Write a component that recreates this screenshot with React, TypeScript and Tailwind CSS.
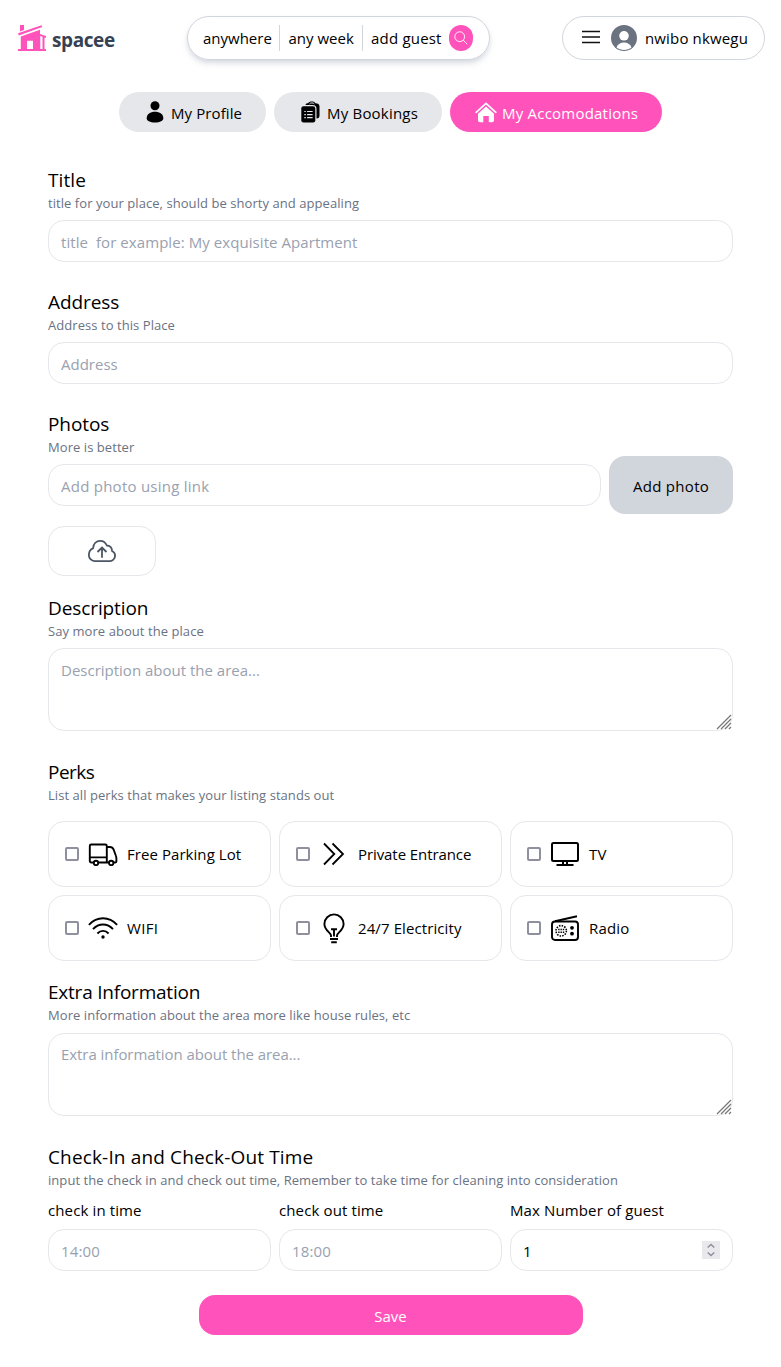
import type { ReactNode } from 'react';

const LogoIcon = () => (
  <svg width="28" height="26" viewBox="0 0 28 26" fill="#ff53bb" className="shrink-0">
    <path d="M2 0h4v5l-4 1.600z" />
    <path d="M0 8.300 23.500.200l.700 1.700L.800 10.500z" />
    <path d="M2.800 11.600 22 4.800V9l6 2v1.700h-1.500V24H28v2H0v-2h2.800zM9 15.700V24h6v-8.300zM22.300 11v13h2.200V11.700z" fillRule="evenodd" />
  </svg>
);

const SearchIcon = () => (
  <svg width="14" height="14" viewBox="0 0 14 14" fill="none" stroke="white" strokeWidth="0.9">
    <circle cx="5.700" cy="5.700" r="4.900" />
    <path d="m9.300 9.300 4 4" />
  </svg>
);

const MenuIcon = () => (
  <svg width="18" height="14" viewBox="0 0 18 14" stroke="#111" strokeWidth="1.500">
    <path d="M0 1.500h18M0 7h18M0 12.500h18" />
  </svg>
);

const AvatarIcon = () => (
  <svg width="26" height="26" viewBox="0 0 26 26">
    <circle cx="13" cy="13" r="13" fill="#6b7280" />
    <circle cx="13" cy="10.800" r="4.800" fill="white" />
    <path d="M5.500 22.500c1.300-3.400 4-5 7.500-5s6.200 1.600 7.500 5c-4 3.200-11 3.200-15 0z" fill="white" />
  </svg>
);

const PersonIcon = () => (
  <svg width="18" height="22" viewBox="0 0 18 22">
    <circle cx="9" cy="4.800" r="4.500" />
    <path d="M.700 17.300C.700 13 4.300 10.800 9 10.800s8.300 2.200 8.300 6.500c0 2.700-3.200 4.200-8.300 4.200S.700 20 .700 17.300z" />
  </svg>
);

const BookingsIcon = () => (
  <svg width="19" height="22" viewBox="0 0 19 22">
    <path d="M4.500 4C4.800 2.500 6 2.300 7 2.300 7.800.900 9 .400 10.800.400s3 .500 3.700 1.900c2.500 0 4 .900 4 3.200v9c0 2-.800 3-3 3V8c0-2.600-1.200-4-4-4z" />
    <path d="M8.500 2.900c.700-1.300 4.100-1.300 4.800 0" fill="none" stroke="#e5e7eb" strokeWidth="1" />
    <rect x=".300" y="5.300" width="14" height="16.200" rx="2.200" />
    <path d="M3.300 10.500h1.500m1.300 0h5.500M3.300 13.600h1.500m1.300 0h5.500M3.300 16.700h1.500m1.300 0h5.500" stroke="#e5e7eb" strokeWidth="1.200" />
  </svg>
);

const HomeIcon = () => (
  <svg width="22" height="21" viewBox="0 0 22 21" fill="white">
    <path d="m1.200 10.300 9.800-9 9.800 9" fill="none" stroke="white" strokeWidth="1.700" strokeLinecap="round" strokeLinejoin="round" />
    <path d="m11 4.500 8 7.300v6.500a2 2 0 0 1-2 2h-3.200v-6.200H8.300v6.200H5a2 2 0 0 1-2-2v-6.500z" />
  </svg>
);

const CloudUploadIcon = () => (
  <svg width="28" height="22" viewBox="0 0 28 22" fill="none" stroke="#4b5563" strokeWidth="1.800" strokeLinejoin="round">
    <path d="M6.700 21.100h14.600a5.400 5.400 0 0 0 5.800-5.300c0-2.300-1.200-4-3.100-4.800.100-3.400-2.300-5.500-5.200-5.500C17.600 2.700 15.200.900 12.200.900 8.300.900 5.300 3.700 5.100 8.300 2.500 9.200.900 11.600.900 14.800a6 6 0 0 0 5.800 6.300z" />
    <path d="M14 17.800V7.800M9.500 12 14 7.600l4.500 4.400" strokeLinejoin="miter" />
  </svg>
);

const TruckIcon = () => (
  <svg width="30" height="24" viewBox="0 0 30 24" fill="none" stroke="black" strokeWidth="1.900" strokeLinejoin="round">
    <path d="M5.500 20.500H3.300A1.500 1.500 0 0 1 1.800 19V4A1.500 1.500 0 0 1 3.300 2.500h14A1.500 1.500 0 0 1 18.800 4v16.500M10.500 20.500h10.300M1.800 15.400h17M18.800 5h3.300c1.800 0 2.700.800 3.500 2.500l2.200 6c.500 1.200.600 2 .600 3.300v2.300a1.300 1.300 0 0 1-1.300 1.400h-1.200" />
    <circle cx="8" cy="21" r="2.200" />
    <circle cx="23.200" cy="21" r="2.200" />
  </svg>
);

const ChevronsIcon = () => (
  <svg width="22" height="24" viewBox="0 0 22 24" fill="none" stroke="black" strokeWidth="1.800">
    <path d="m1 1.500 10.300 10.500L1 22.500M9.500 1.500 20 12 9.500 22.500" />
  </svg>
);

const TvIcon = () => (
  <svg width="28" height="24" viewBox="0 0 28 24" fill="none" stroke="black" strokeWidth="2">
    <rect x="1" y="1" width="26" height="18" rx="1.500" />
    <path d="M5.500 23h17M12 19.500V23M16 19.500V23" />
  </svg>
);

const WifiIcon = () => (
  <svg width="30" height="22" viewBox="0 0 30 22" fill="none" stroke="black" strokeWidth="1.900">
    <path d="M.900 7.900C9-.900 21-.900 29.100 7.900M5 12.200c5.700-6.300 14.300-6.300 20 0M9.400 16.500c3.200-3.500 8-3.500 11.200 0" />
    <circle cx="15" cy="20" r="1.700" fill="black" stroke="none" />
  </svg>
);

const BulbIcon = () => (
  <svg width="22" height="31" viewBox="0 0 22 31" fill="none" stroke="black" strokeWidth="1.900">
    <path d="M8 24v-1.500c0-2.800-6.600-5-6.600-11.500a9.600 9.600 0 0 1 19.200 0c0 6.500-6.600 8.700-6.600 11.500V24M11 23.500v-7.300M8 16.200h6M7 26h8M8.200 29.300h5.600" />
  </svg>
);

const RadioIcon = () => (
  <svg width="28" height="26" viewBox="0 0 28 26" fill="none" stroke="black" strokeWidth="1.900">
    <path d="M4 6.300 26 1.200" />
    <rect x="1" y="6.500" width="26" height="18.500" rx="3" />
    <circle cx="10.200" cy="15.800" r="5.200" strokeWidth="1.600" strokeDasharray="1.500 1.200" />
    <path d="M7.200 14.500h6M7.200 17.200h6" strokeWidth="1.500" strokeDasharray="1.400 .900" />
    <circle cx="21" cy="12.800" r="1.900" fill="black" stroke="none" />
    <circle cx="21" cy="18.700" r="1.900" fill="black" stroke="none" />
  </svg>
);

const Grip = () => (
  <svg width="16" height="16" viewBox="0 0 16 16" className="pointer-events-none absolute right-px bottom-px" stroke="#777" strokeWidth="1.200">
    <path d="M1 15 15 1M5 15 15 5M9 15l6-6M13 15l2-2" />
  </svg>
);

const box = 'block h-[42px] w-full rounded-2xl border border-gray-200 px-3 pt-px outline-none placeholder:text-gray-400';

function Heading({ title, hint, titleClass = 'tracking-[-0.1px]' }: { title: string; hint: string; titleClass?: string }) {
  return (
    <>
      <h2 className={`text-[19px] leading-7 ${titleClass}`}>{title}</h2>
      <p className="-mt-px pb-px text-[13px] leading-5 tracking-[0.06px] text-gray-500">{hint}</p>
    </>
  );
}

function Area({ placeholder, className }: { placeholder: string; className: string }) {
  return (
    <div className="relative h-[83px]">
      <textarea placeholder={placeholder} className={`block h-full w-full resize-none rounded-2xl border border-gray-200 px-3 leading-6 outline-none placeholder:text-gray-400 ${className}`} />
      <Grip />
    </div>
  );
}

const perks: { name: string; icon: ReactNode; labelClass?: string }[] = [
  { name: 'Free Parking Lot', icon: <TruckIcon />, labelClass: 'tracking-[0.06px]' },
  { name: 'Private Entrance', icon: <ChevronsIcon />, labelClass: 'tracking-[-0.08px]' },
  { name: 'TV', icon: <TvIcon />, labelClass: 'tracking-[0.3px]' },
  { name: 'WIFI', icon: <WifiIcon />, labelClass: 'tracking-[0.3px]' },
  { name: '24/7 Electricity', icon: <BulbIcon />, labelClass: 'tracking-[0.1px]' },
  { name: 'Radio', icon: <RadioIcon />, labelClass: 'tracking-[0.2px]' },
];

export default function App() {
  return (
    <div className="h-[1367px] w-full overflow-hidden bg-white font-['Open_Sans',sans-serif] text-[15px] leading-6 text-black">
      <header className="flex h-[60px] items-start pt-4 pr-4 pl-[18px]">
        <a className="flex w-[100px] items-start pt-[9px]">
          <LogoIcon />
          <span className="ml-[6px] pt-[2px] text-[19px] leading-[26px] font-bold tracking-[-0.4px] text-gray-700">spacee</span>
        </a>
        <div className="ml-[69px] flex h-11 w-[303px] items-center rounded-full border border-gray-300 pl-[15px] shadow-md shadow-gray-300/80">
          <span className="w-[76px] whitespace-nowrap">anywhere</span>
          <span className="h-[26px] w-[83px] border-l border-gray-300 pt-px pl-[8.5px] whitespace-nowrap">any week</span>
          <span className="h-[26px] w-[87px] border-l border-gray-300 pt-px pl-2 tracking-[0.2px] whitespace-nowrap">add guest</span>
          <button className="flex h-[26px] w-6 items-center justify-center rounded-full bg-[#ff53bb]"><SearchIcon /></button>
        </div>
        <div className="ml-auto flex h-11 w-[203px] items-center rounded-full border border-gray-300 pl-[19px]">
          <span className="-mt-0.5"><MenuIcon /></span>
          <span className="ml-[11px]"><AvatarIcon /></span>
          <span className="ml-2 tracking-[0.15px] whitespace-nowrap">nwibo nkwegu</span>
        </div>
      </header>

      <nav className="mt-8 flex justify-center gap-2">
        <a className="flex h-10 w-[147px] items-center rounded-full bg-gray-200 pl-[27px]">
          <PersonIcon /><span className="mt-px ml-[7px] tracking-[0.1px] whitespace-nowrap">My Profile</span>
        </a>
        <a className="flex h-10 w-[168px] items-center rounded-full bg-gray-200 pl-[27px]">
          <BookingsIcon /><span className="mt-px ml-[7px] tracking-[0.2px] whitespace-nowrap">My Bookings</span>
        </a>
        <a className="flex h-10 w-[212px] items-center rounded-full bg-[#ff53bb] pl-[25px] text-white">
          <HomeIcon /><span className="mt-px ml-[5px] tracking-[0.22px] whitespace-nowrap">My Accomodations</span>
        </a>
      </nav>

      <form className="mt-[34px] px-12">
        <section className="mb-[26px]">
          <Heading title="Title" titleClass="tracking-[0.1px]" hint="title for your place, should be shorty and appealing" />
          <input className={`${box} mt-[6px] tracking-[0.07px]`} placeholder="title  for example: My exquisite Apartment" />
        </section>
        <section className="mb-[26px]">
          <Heading title="Address" hint="Address to this Place" />
          <input className={`${box} mt-[6px]`} placeholder="Address" />
        </section>
        <section className="mb-[18px]">
          <Heading title="Photos" hint="More is better" />
          <div className="-mt-0.5 flex items-center gap-2">
            <input className={`${box} min-w-0 flex-1 tracking-[0.25px]`} placeholder="Add photo using link" />
            <button type="button" className="h-[58px] w-[124px] rounded-2xl bg-gray-300 pt-px tracking-[0.3px]">Add photo</button>
          </div>
          <label className="mt-3 flex h-[50px] w-[108px] items-center justify-center rounded-2xl border border-gray-200">
            <CloudUploadIcon />
          </label>
        </section>
        <section className="mb-[27px]">
          <Heading title="Description" hint="Say more about the place" />
          <div className="mt-[6px]"><Area className="py-[9px]" placeholder="Description about the area..." /></div>
        </section>
        <section className="mb-[17px]">
          <Heading title="Perks" titleClass="tracking-[-0.5px]" hint="List all perks that makes your listing stands out" />
          <div className="mt-[15px] grid grid-cols-3 gap-2">
            {perks.map((perk) => (
              <label key={perk.name} className="flex h-[66px] items-center rounded-2xl border border-gray-200 pl-4">
                <input type="checkbox" className="h-[14px] w-[14px] shrink-0 appearance-none rounded-[2px] border-2 border-[#8f8f9d] bg-white" />
                <span className="ml-2 flex w-8 shrink-0 justify-center">{perk.icon}</span>
                <span className={`ml-2 whitespace-nowrap ${perk.labelClass ?? ''}`}>{perk.name}</span>
              </label>
            ))}
          </div>
        </section>
        <section className="mb-[27px]">
          <Heading title="Extra Information" titleClass="tracking-[-0.22px]" hint="More information about the area more like house rules, etc" />
          <div className="mt-[7px]"><Area className="py-2 tracking-[-0.06px]" placeholder="Extra information about the area..." /></div>
        </section>
        <section>
          <Heading title="Check-In and Check-Out Time" titleClass="tracking-[0.15px]" hint="input the check in and check out time, Remember to take time for cleaning into consideration" />
          <div className="mt-[7px] grid grid-cols-3 gap-2 tracking-[0.12px]">
            <label>check in time<input className={`${box} mt-[7px]`} placeholder="14:00" /></label>
            <label>check out time<input className={`${box} mt-[7px]`} placeholder="18:00" /></label>
            <label>
              Max Number of guest
              <span className="mt-[7px] flex h-[42px] items-center justify-between rounded-2xl border border-gray-200 pr-3 pl-3">
                <span className="pt-px">1</span>
                <svg width="18" height="18" viewBox="0 0 18 18" className="bg-[#e9e9ed]" fill="none" stroke="#8f8f9d" strokeWidth="1.500">
                  <path d="m5.700 6.500 3.300-3 3.300 3M5.700 11.500l3.300 3 3.300-3" />
                </svg>
              </span>
            </label>
          </div>
        </section>
        <button type="button" className="mx-auto mt-6 block h-10 w-96 rounded-2xl bg-[#ff53bb] pt-px text-white">Save</button>
      </form>
    </div>
  );
}
